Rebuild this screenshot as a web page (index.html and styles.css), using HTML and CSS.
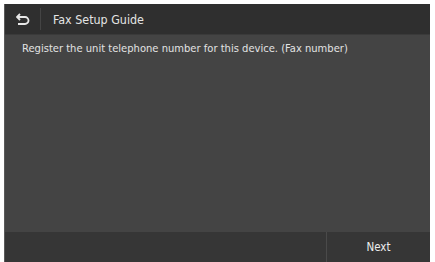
FILE: index.html
```html
<!DOCTYPE html>
<html>
<head>
<meta charset="utf-8">
<link rel="stylesheet" href="styles.css">
</head>
<body>
<div class="screen">
  <div class="header">
    <div class="back">
      <svg width="14" height="12" viewBox="0 0 14 12"><path d="M4 1 L1 4 L4 7 M1.5 4 H9 A3.5 3.5 0 0 1 9 11 H2" fill="none" stroke="#e8e8e8" stroke-width="1.8"/></svg>
    </div>
    <div class="title">Fax Setup Guide</div>
  </div>
  <div class="content">
    <p class="msg">Register the unit telephone number for this device. (Fax number)</p>
  </div>
  <div class="footer">
    <div class="spacer"></div>
    <div class="next">Next</div>
  </div>
</div>
</body>
</html>
```
FILE: styles.css
```css
html, body { margin: 0; padding: 0; background: #ffffff; }
body { width: 435px; height: 262px; overflow: hidden; }
.screen {
  margin: 4px 5px 0 4px;
  height: 258px;
  display: flex;
  flex-direction: column;
  background: #444444;
  border-left: 1px solid #5a5a5a;
  font-family: "DejaVu Sans Condensed", "DejaVu Sans", sans-serif;
  color: #e6e6e6;
}
.header {
  height: 30px;
  background: #2f2f2f;
  display: flex;
  align-items: center;
  border-bottom: 1px solid #3a3a3a;
}
.back {
  width: 36px;
  display: flex;
  align-items: center;
  justify-content: center;
  border-right: 1px solid #444;
  box-sizing: border-box;
  height: 22px;
}
.title {
  padding-left: 12px;
  font-size: 12.4px;
  color: #e4e4e4;
}
.content { flex: 1; padding: 7px 0 0 17px; }
.msg { margin: 0; font-size: 11.1px; color: #e2e2e2; }
.footer {
  height: 30px;
  background: #363636;
  display: flex;
}
.spacer { flex: 1; border-right: 1px solid #4a4a4a; }
.next {
  width: 103px;
  display: flex;
  align-items: center;
  justify-content: center;
  font-size: 11.5px;
  color: #ececec;
}
```
